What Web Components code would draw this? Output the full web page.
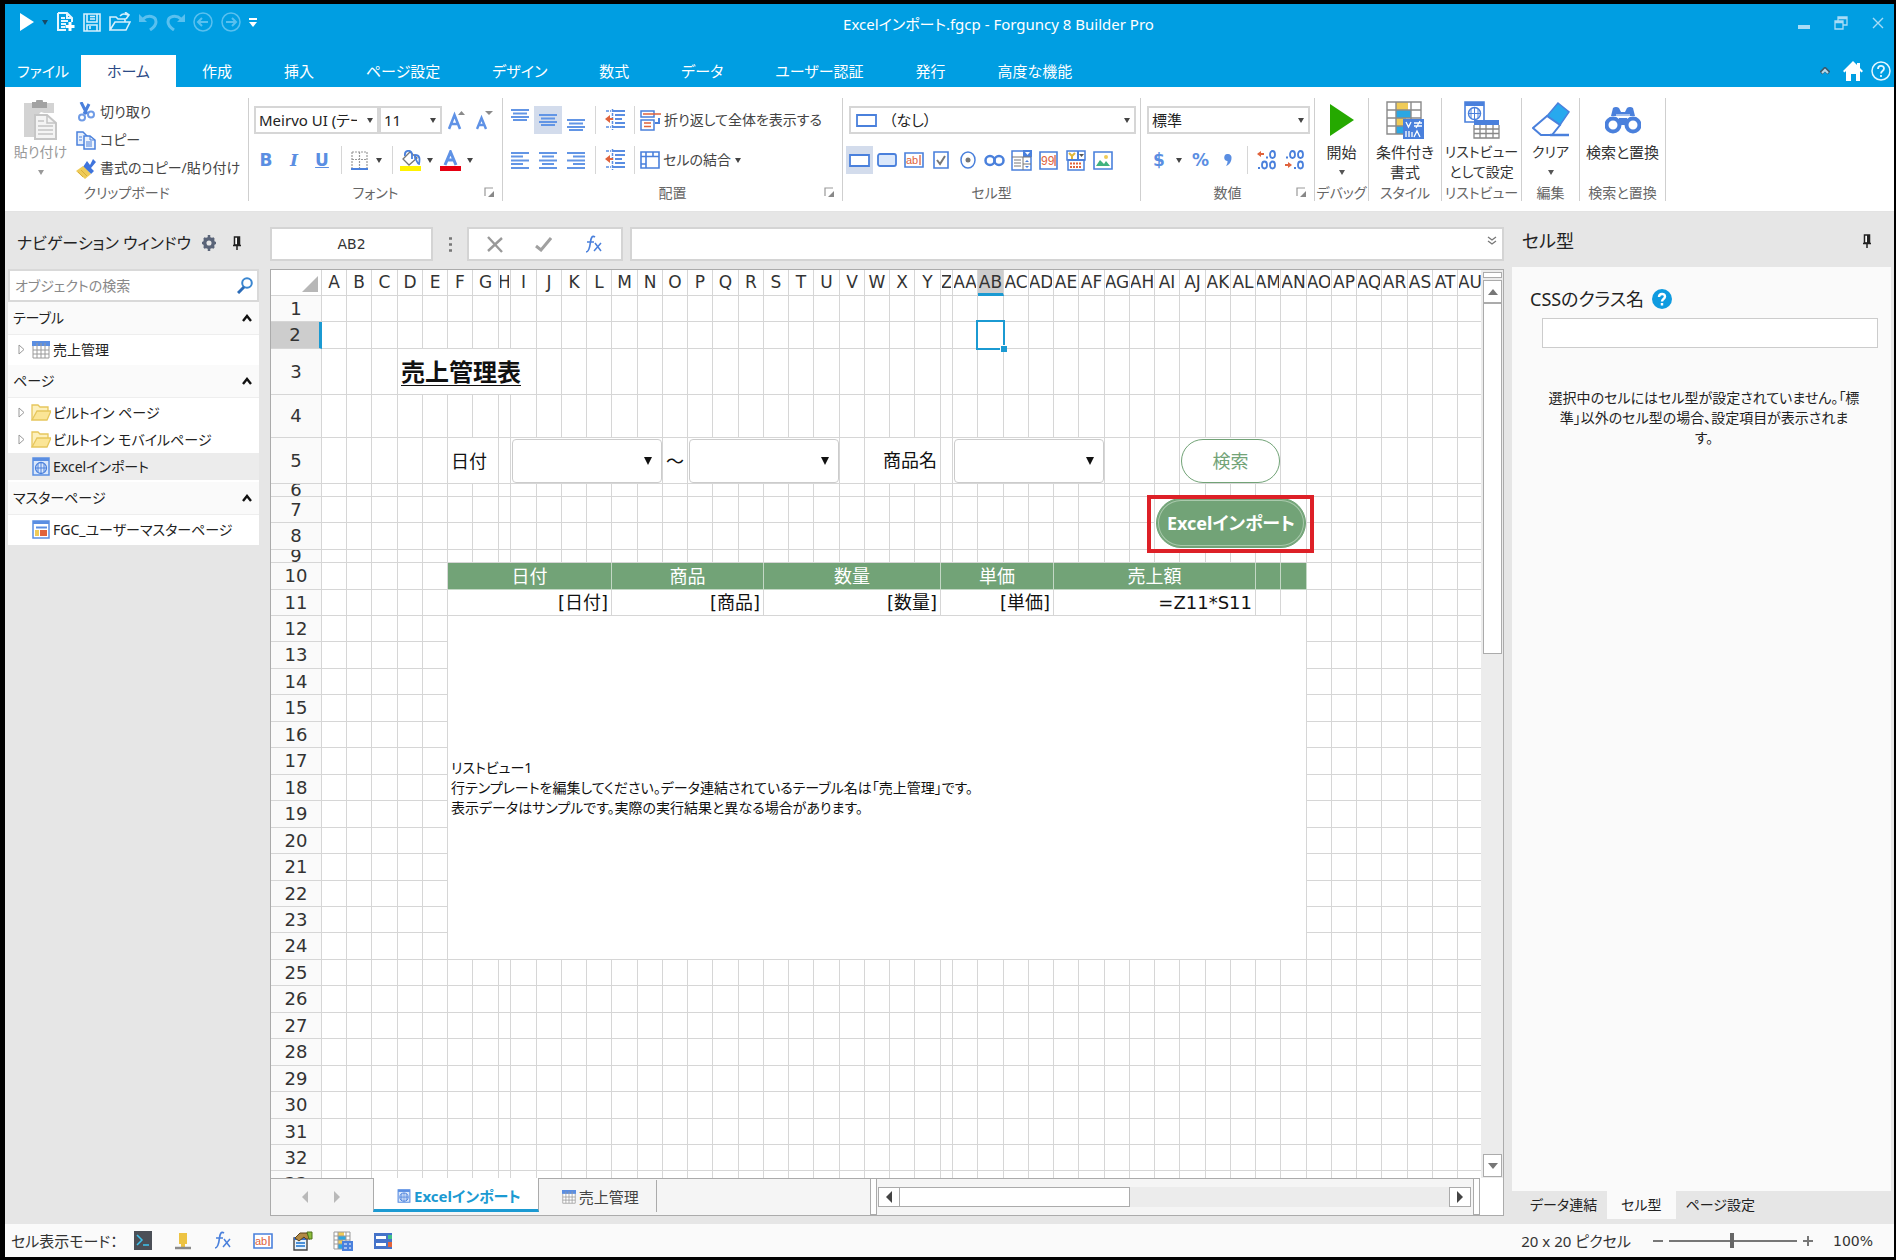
<!DOCTYPE html>
<html lang="ja">
<head>
<meta charset="utf-8">
<title>Excelインポート.fgcp - Forguncy 8 Builder Pro</title>
<style>
  html, body { height: 100%; margin: 0; }
  body {
    background: #000;
    font: 15px/20px "Noto Sans", "Noto Sans CJK JP", sans-serif;
    font-feature-settings: "palt";
    color: #333;
    overflow: hidden;
  }
</style>
</head>
<body>
<app-window></app-window>
<script>
const B = '#4a80dc', O = '#e0633c', G = '#8a8a8a', Y = '#efcb58', L = '#a9dcf6';

/* name: [width, height, markup] */
const ICONS = {
  down: [8, 5, `<path d="M1 0h6L4 5z" fill="currentColor"/>`],
  run: [14, 18, `<path d="M0 0l14 9-14 9z" fill="#fff"/>`],
  newdoc: [18, 20, `<path d="M1 1h9l5 5v4M1 1v17h8M10 1v5h5M4 6h4M4 9h7M4 12h5M4 15h4" fill="none" stroke="#e4f6ff" stroke-width="2"/><path d="M13 10v9M8.500 14.500h9" stroke="#fff" stroke-width="3"/>`],
  save: [18, 19, `<path d="M1 1h16v17H1zM4 1v8h10V1M7 3.500h5M7 6h5M4 18v-6h10v6M7 13v3" fill="none" stroke="#d5f0fd" stroke-width="1.600"/>`],
  open: [22, 20, `<path d="M1 18V5h6l2 2h7v3M1 18l5-8h15l-4 8zM11 4c3-3 5-2 8-1M16 0l4 3-3 4" fill="none" stroke="#d5f0fd" stroke-width="1.600"/>`],
  undo: [19, 18, `<path d="M4 6c5-4.500 13-3 13 3 0 4-3 6-6 8" fill="none" stroke="#59c0ef" stroke-width="3"/><path d="M0 1v8h8z" fill="#59c0ef"/>`],
  redo: [19, 18, `<path d="M15 6C10 1.500 2 3 2 9c0 4 3 6 6 8" fill="none" stroke="#59c0ef" stroke-width="3"/><path d="M19 1v8h-8z" fill="#59c0ef"/>`],
  back: [20, 20, `<circle cx="10" cy="10" r="9" fill="none" stroke="#59c0ef" stroke-width="1.500"/><path d="M15 10H6M9 6l-4 4 4 4" fill="none" stroke="#59c0ef" stroke-width="2"/>`],
  fwd: [20, 20, `<circle cx="10" cy="10" r="9" fill="none" stroke="#59c0ef" stroke-width="1.500"/><path d="M5 10h9M11 6l4 4-4 4" fill="none" stroke="#59c0ef" stroke-width="2"/>`],
  qmenu: [8, 9, `<path d="M0 1h8" stroke="#fff" stroke-width="2"/><path d="M0 4h8L4 9z" fill="#fff"/>`],
  min: [12, 14, `<path d="M0 11h12" stroke="${L}" stroke-width="4"/>`],
  restore: [14, 14, `<path d="M1 5h8v8H1zM1 6.500h8M4 5V1h9v8H9M4 2.500h9" fill="none" stroke="${L}" stroke-width="1.300"/>`],
  close: [12, 12, `<path d="M1 1l10 10M11 1L1 11" stroke="${L}" stroke-width="1.400"/>`],
  collapse: [10, 9, `<path d="M1 6l4-4 4 4" fill="none" stroke="#39586b" stroke-width="4"/><path d="M2 6l3-3 3 3" fill="none" stroke="#b8d8e8" stroke-width="2"/>`],
  home: [20, 20, `<path d="M10 0l4 4V2h3v5l3 3-1.500 1.500L17 10v10h-4v-7H8v7H3V10l-1.500 1.500L0 10z" fill="#fff"/>`],
  qhelp: [20, 20, `<circle cx="10" cy="10" r="9" fill="none" stroke="#e4f6ff" stroke-width="1.500"/><path d="M7 8c0-4 6-4 6-.5 0 2.500-3 2.500-3 5M10 14v2" fill="none" stroke="#e4f6ff" stroke-width="1.800"/>`],
  help: [20, 20, `<circle cx="10" cy="10" r="10" fill="#0f9be0"/><path d="M7 8c0-4 6-4 6-.5 0 2.500-3 2.500-3 5M10 14v2.500" fill="none" stroke="#fff" stroke-width="2.400"/>`],
  paste: [34, 40, `<path d="M0 3h30v10H20l-3-1-7 7v18H0z" fill="#d3d3d3"/><path d="M8 2h4a3 3 0 0 1 7 0h4v6H8z" fill="#a2a2a2"/><path d="M11 15h12l9 8v16H11z" fill="#f4f4f4" stroke="#c6c6c6" stroke-width="2"/><path d="M23 15v8h9M14 21h6M14 26h15M14 30h15M14 34h15" fill="none" stroke="#c3c3c3" stroke-width="1.500"/>`],
  cut: [17, 20, `<path d="M3 0l6 12M11 2L6 12" stroke="${B}" stroke-width="3"/><circle cx="4" cy="15.500" r="3" fill="none" stroke="#6f9be6" stroke-width="2"/><circle cx="13" cy="12.500" r="3" fill="none" stroke="#6f9be6" stroke-width="2"/>`],
  copy: [20, 19, `<path d="M1 1h6l4 4v9H1z" fill="#e8f0fc" stroke="${B}" stroke-width="1.500"/><path d="M8 5h6l5 4v9H8z" fill="#eef4fd" stroke="${B}" stroke-width="1.500"/><path d="M14 5v4h5M3 6h3M3 9h3M10 11h6M10 13h6M10 15h6" fill="none" stroke="${B}"/>`],
  painter: [20, 21, `<path d="M11 3l3 4 3-6 3 3-5 6 3 3-3 3-8-7z" fill="#3f74dc"/><path d="M7 8l8 8-6 5-9-8z" fill="${Y}"/><path d="M2 14l5 5M5 12l6 6" stroke="#d8ae3a" fill="none"/>`],
  fontup: [17, 19, `<path d="M1 18L6.500 4 12 18M3 13h7" fill="none" stroke="#5f92e6" stroke-width="2.600"/><path d="M10 4h7l-3.500-4z" fill="${G}"/>`],
  fontdown: [17, 19, `<path d="M1 18L5.500 7 10 18M3 14h5" fill="none" stroke="#5f92e6" stroke-width="2.400"/><path d="M9 0h8l-4 4z" fill="${G}"/>`],
  borders: [17, 19, `<path d="M1 1h15v16M1 1v16M8.500 1v16M1 8.500h15" fill="none" stroke="#999" stroke-width="1.200" stroke-dasharray="2 1"/><path d="M0 18h17" stroke="${B}" stroke-width="2"/>`],
  bucket: [21, 21, `<path d="M10 2l7 6-8 7-6-6z" fill="#fff" stroke="#777" stroke-width="1.300"/><path d="M5 6c-1-6 6-7 7-2v5M15 5c5 0 5 4 4 9-2 0-2-4-4-6z" fill="none" stroke="${B}" stroke-width="1.800"/><path d="M0 18.500h21" stroke="#fff200" stroke-width="5"/>`],
  fontcolor: [21, 21, `<path d="M5 15l5.500-13L16 15M7 10h7" fill="none" stroke="#5f92e6" stroke-width="3"/><path d="M0 18.500h21" stroke="#e60012" stroke-width="5"/>`],
  vtop: [18, 22, `<path d="M0 1h18M2 4.500h14M0 8h18M2 11h14" stroke="#6295e5" stroke-width="2"/>`],
  vmid: [18, 12, `<path d="M0 1h18M2 4.500h14M0 8h18M2 11h14" stroke="#6295e5" stroke-width="2"/>`],
  vbot: [18, 22, `<path d="M0 11h18M2 14.500h14M0 18h18M2 21h14" stroke="#6295e5" stroke-width="2"/>`],
  aleft: [18, 17, `<path d="M0 1h18M0 4.500h12M0 8.500h18M0 12h12M0 16h18" stroke="#6295e5" stroke-width="2"/>`],
  acenter: [18, 17, `<path d="M0 1h18M3 4.500h12M0 8.500h18M3 12h12M0 16h18" stroke="#6295e5" stroke-width="2"/>`],
  aright: [18, 17, `<path d="M0 1h18M6 4.500h12M0 8.500h18M6 12h12M0 16h18" stroke="#6295e5" stroke-width="2"/>`],
  indent: [20, 22, `<path d="M8 2h12M10 6h10M10 10h7M10 14h10M8 18h12" stroke="#5a8ee2" stroke-width="2"/><path d="M1 2h5M1 18h5M7.500 0v21" stroke="#5a8ee2" stroke-width="1.500" stroke-dasharray="3 1"/><path d="M0 10l5-4v8z" fill="${O}"/><path d="M3 10h5" stroke="${O}" stroke-width="2"/>`],
  wrap: [21, 21, `<path d="M1 1h13v6H1zM1 10h13v10H1z" fill="#fff" stroke="${B}" stroke-width="1.500"/><path d="M3 4h18M4 13h7M4 16.500h7" stroke="${O}" stroke-width="1.500"/><path d="M19 8v5h-4" fill="none" stroke="${B}" stroke-width="2"/>`],
  merge: [20, 18, `<path d="M1 1h18v16H1zM6 1v16M1 5.500h18M13 1v4.500M1 13h5" fill="none" stroke="${B}" stroke-width="1.600"/>`],
  ctNone: [21, 13, `<path d="M1 1h19v11H1z" fill="#fff" stroke="${B}" stroke-width="1.800"/>`],
  ctButton: [20, 14, `<rect x="1" y="1" width="18" height="12" rx="2" fill="#dbe8fb" stroke="${B}" stroke-width="1.800"/>`],
  ctText: [20, 16, `<path d="M1 1h18v14H1z" fill="#fff" stroke="${B}" stroke-width="1.600"/><text x="2" y="12" font-size="11" font-family="Liberation Sans" fill="${O}">ab</text><path d="M16 3v10" stroke="${O}" stroke-width="1.300"/>`],
  ctCheck: [16, 18, `<path d="M1 1h14v16H1z" fill="#fff" stroke="${B}" stroke-width="1.600"/><path d="M4 9l3 4 5-8" fill="none" stroke="#777" stroke-width="2"/>`],
  ctRadio: [16, 18, `<ellipse cx="8" cy="9" rx="7" ry="8" fill="#fff" stroke="${B}" stroke-width="1.500"/><circle cx="8" cy="9" r="2.500" fill="#777"/>`],
  ctLink: [21, 13, `<circle cx="6" cy="6.500" r="4.500" fill="none" stroke="${B}" stroke-width="2.500"/><circle cx="15" cy="6.500" r="4.500" fill="none" stroke="${B}" stroke-width="2.500"/>`],
  ctList: [21, 21, `<path d="M1 1h19v19H1z" fill="#fff" stroke="${B}" stroke-width="1.500"/><path d="M12 0h9v7h-9z" fill="${B}"/><path d="M14 2h5l-2.500 3z" fill="#fff"/><path d="M12 7v13M1 7h19M3 10h7M3 13h7M3 16h7M12 14h8" stroke="#777"/><path d="M14 12l2-2 2 2zM14 16l2 2 2-2z" fill="${B}"/>`],
  ctNum: [19, 19, `<path d="M1 1h17v17H1z" fill="#fff" stroke="${B}" stroke-width="1.600"/><text x="2" y="14" font-size="12" font-family="Liberation Sans" fill="${O}">99</text><path d="M16 4v11" stroke="${O}" stroke-width="1.300"/>`],
  ctDate: [20, 21, `<path d="M1 1h18v9H1zM2 10h16v10H2z" fill="#fff" stroke="${B}" stroke-width="1.500"/><path d="M3 3l3 3 3-3M6 6v3" stroke="#e0b73a" stroke-width="2" fill="none"/><path d="M12 1v9M2 10h17" stroke="${B}" stroke-width="2"/><path d="M13 4h5l-2.500 3z" fill="#555"/><path d="M4 13.500h12M4 17h12" stroke="${O}" stroke-width="2" stroke-dasharray="2 1"/>`],
  ctImage: [20, 19, `<path d="M1 1h18v17H1z" fill="#fff" stroke="${B}" stroke-width="1.600"/><path d="M3 15l4-6 4 4 2-3 4 5z" fill="#3fb27f"/><circle cx="13" cy="6" r="2" fill="${Y}"/>`],
  decinc: [20, 20, `<path d="M0 4l4-3v6z" fill="${O}"/><path d="M2 4h5" stroke="${O}" stroke-width="2"/><path d="M9 7.500h2M1 18h2" stroke="${B}" stroke-width="2"/><g fill="none" stroke="${B}" stroke-width="1.800"><ellipse cx="15.500" cy="4.500" rx="2.500" ry="3.500"/><ellipse cx="7.500" cy="15" rx="2.500" ry="3.500"/><ellipse cx="15.500" cy="15" rx="2.500" ry="3.500"/></g>`],
  decdec: [20, 20, `<path d="M7 15l-4-3v6z" fill="${O}"/><path d="M0 15h5" stroke="${O}" stroke-width="2"/><path d="M9 18h2M1 7.500h2" stroke="${B}" stroke-width="2"/><g fill="none" stroke="${B}" stroke-width="1.800"><ellipse cx="7.500" cy="4.500" rx="2.500" ry="3.500"/><ellipse cx="15.500" cy="4.500" rx="2.500" ry="3.500"/><ellipse cx="15.500" cy="15" rx="2.500" ry="3.500"/></g>`],
  comma: [8, 12, `<path d="M4 0a3.500 3.500 0 0 1 3.500 4C7.500 8 5 11 2 12c1-1.500 1.500-3 1.500-5A3.500 3.500 0 0 1 4 0z" fill="#5a8ee2"/>`],
  launcher: [11, 11, `<path d="M1 9V1h8" fill="none" stroke="#999" stroke-width="1.200"/><path d="M10 4v6H4z" fill="#888"/>`],
  play: [24, 32, `<path d="M0 0l24 16L0 32z" fill="#25a900"/>`],
  cond: [38, 38, `<path d="M1 1h34v32H1z" fill="#fff"/><path d="M10 1h12v8H10zM10 17h10v8H10z" fill="${Y}"/><path d="M10 9h15v8H10zM10 25h7v8h-7z" fill="#2aa7e4"/><path d="M1 1h34v32H1zM1 9h34M1 17h34M1 25h34M10 1v32M25 1v32" fill="none" stroke="#8a8a8a" stroke-width="1.400"/><path d="M17 18h21v20H17z" fill="${B}"/><path d="M28 22h8M28 25h8M34 20l-4 7M20 30v6M23 30v6M20 21l2.500 5 2.500-5M28 36l3-6 3 6M26 31v5" fill="none" stroke="#fff" stroke-width="1.300"/>`],
  listview: [36, 38, `<path d="M1 1h19v20H1z" fill="#fff" stroke="${B}" stroke-width="1.600"/><path d="M1 1h19v4H1z" fill="${B}"/><circle cx="10.500" cy="12.500" r="6" fill="none" stroke="${B}" stroke-width="1.500"/><path d="M10.500 6v13M4 12.500h13M7 8v9M14 8v9" stroke="${B}"/><path d="M10 19h25v18H10z" fill="#fff"/><path d="M10 19h25v5H10z" fill="${B}"/><path d="M10 24v13h25V24M10 28h25M10 32.500h25M16 24v13M22 24v13M29 24v13" fill="none" stroke="#888" stroke-width="1.300"/>`],
  eraser: [38, 36, `<path d="M26 1l11 9-9 13-13-9z" fill="#27a9ee" stroke="${B}" stroke-width="1.500"/><path d="M15 14l13 9-8 10H9L1 26z" fill="#fff" stroke="${B}" stroke-width="2"/><path d="M18 33h19" stroke="${B}" stroke-width="2.500"/>`],
  binoc: [36, 28, `<path d="M8 2a4 3 0 0 1 6 0l2 4h4l2-4a4 3 0 0 1 6 0l2 8H6z" fill="${B}"/><circle cx="8" cy="19" r="6.500" fill="#fff" stroke="${B}" stroke-width="4"/><circle cx="28" cy="19" r="6.500" fill="#fff" stroke="${B}" stroke-width="4"/><path d="M14 12h8v7h-8z" fill="${B}"/><path d="M11 9h14" stroke="#fff"/>`],
  gear: [14, 16, `<circle cx="7" cy="8" r="4.300" fill="none" stroke="#5a6478" stroke-width="3.500"/><path d="M7 0v3M7 13v3M0 8h2M12 8h2M2 3l2 2M12 3l-2 2M2 13l2-2M12 13l-2-2" stroke="#5a6478" stroke-width="2.500"/>`],
  pin: [8, 14, `<path d="M1.500 1h5v8h-5z" fill="#fff" stroke="#222" stroke-width="1.500"/><path d="M4 1h3v8H4z" fill="#222"/><path d="M0 9.500h8M4 10v4" stroke="#222" stroke-width="1.500"/>`],
  search: [16, 17, `<circle cx="10" cy="6" r="4.800" fill="none" stroke="#3a86d0" stroke-width="2"/><path d="M7 10l-6 6" stroke="#2c6cb8" stroke-width="3"/>`],
  caret: [10, 8, `<path d="M1 7l4-5 4 5" fill="none" stroke="#111" stroke-width="2.400"/>`],
  expand: [6, 11, `<path d="M1 1l5 4.500L1 10z" fill="#fff" stroke="#999"/>`],
  table: [18, 18, `<path d="M1 1h16v16H1z" fill="#fff"/><path d="M0 0h18v5H0z" fill="#5a8ee2"/><path d="M1 5v12h16V5M1 9h16M1 13h16M5 2v15M9 2v15M13 2v15" fill="none" stroke="#9a9a9a"/>`],
  folder: [20, 17, `<path d="M1 16V1h6l2 2h8v4" fill="#fdf0bd" stroke="#e6c65c" stroke-width="1.300"/><path d="M1 16l5-9h14l-4 9z" fill="#fbe596" stroke="#e6c65c" stroke-width="1.300"/>`],
  page: [18, 19, `<path d="M1 1h16v17H1z" fill="#dbe8fb" stroke="#5a8ee2" stroke-width="1.500"/><path d="M1 1h16v3H1z" fill="#5a8ee2"/><circle cx="9" cy="11" r="5.500" fill="none" stroke="${B}" stroke-width="1.300"/><path d="M9 5v12M3 11h12M6 7v8M12 7v8" stroke="${B}"/>`],
  master: [18, 19, `<path d="M1 1h16v17H1z" fill="#fff" stroke="#5a8ee2" stroke-width="1.500"/><path d="M1 1h16v3H1z" fill="#5a8ee2"/><path d="M4 7.500h11" stroke="#5a8ee2" stroke-width="2"/><path d="M3 10h4v6H3z" fill="${Y}"/><path d="M8 10h7v6H8z" fill="${O}"/>`],
  dots: [3, 15, `<path d="M0 1.500h3M0 7.500h3M0 13.500h3" stroke="#777" stroke-width="2.500"/>`],
  x: [16, 17, `<path d="M1 1l14 15M15 2L1 15" stroke="#999" stroke-width="2.400"/>`],
  check: [17, 15, `<path d="M1 9l5 4L16 1" fill="none" stroke="#a0a0a0" stroke-width="3"/>`],
  fx: [18, 19, `<path d="M10 2c-3-2-4 1-4.500 5S4 17 1 17M2 7h7" fill="none" stroke="${B}" stroke-width="1.700"/><path d="M10 8l6 8M16 8l-7 8" stroke="${B}" stroke-width="1.500"/>`],
  dblchev: [10, 10, `<path d="M1 1l4 3 4-3M1 5l4 3 4-3" fill="none" stroke="#777" stroke-width="1.300"/>`],
  corner: [16, 16, `<path d="M16 0v16H0z" fill="#b7b7b7"/>`],
  up: [10, 6, `<path d="M0 6h10L5 0z" fill="#777"/>`],
  dn: [10, 6, `<path d="M0 0h10L5 6z" fill="#777"/>`],
  lt: [6, 12, `<path d="M6 0v12L0 6z" fill="currentColor"/>`],
  rt: [6, 12, `<path d="M0 0v12l6-6z" fill="currentColor"/>`],
  combo: [8, 8, `<path d="M0 0h8L4 8z" fill="#111"/>`],
  term: [18, 19, `<path d="M0 0h18v19H0z" fill="#4b4f57"/><path d="M3 4l5 5-5 5M9 14h6" fill="none" stroke="#3fc3ee" stroke-width="1.500"/>`],
  marker: [16, 18, `<path d="M4 1h8v11H4zM6 12h4v4H6z" fill="#edc343"/><path d="M0 16h16" stroke="#8a8a8a" stroke-width="2.500"/>`],
  props: [20, 20, `<path d="M1 7h13v12H1z" fill="#e6f2fc" stroke="#444" stroke-width="1.400"/><path d="M1 6h13v3H1z" fill="#3a6cc4"/><path d="M3 12h9M3 15h9" stroke="#4a90d9" stroke-width="2"/><path d="M2 7l5-5h7l3 6h-4l-2-2-5 4z" fill="#b28a45" stroke="#5c431a"/><path d="M14 1h5v7h-3z" fill="#8dbd3c" stroke="#4c7018"/>`],
  cells: [20, 20, `<path d="M1 1h16v17H1z" fill="#fff"/><path d="M5 1h6v4H5zM5 9h5v4H5z" fill="${Y}"/><path d="M5 5h8v4H5zM5 13h4v5H5z" fill="#2aa7e4"/><path d="M1 1h16v17H1zM1 5h16M1 9h16M1 13h16M5 1v17M13 1v17" fill="none" stroke="#999"/><path d="M9 10h11v10H9z" fill="${B}"/><path d="M11 13h3M16 13h2M11 17h3M16 17h2" stroke="#fff"/>`],
  rows: [20, 18, `<path d="M1 1h18v16H1z" fill="#4573c9"/><path d="M3 4h10v3H3zM3 11h10v3H3z" fill="#fff"/><path d="M15 3h4v4h-4z" fill="#3fc08a"/><path d="M15 10h4v5h-4z" fill="${O}"/>`],
  minus: [10, 10, `<path d="M0 5h10" stroke="#777" stroke-width="2"/>`],
  plus: [10, 10, `<path d="M0 5h10M5 0v10" stroke="#777" stroke-width="2"/>`],
};

const BASE = `
  *, ::before, ::after { box-sizing: border-box; }
  :host { box-sizing: border-box; display: block; }
  :host([hidden]) { display: none; }
  button, input, select { font: inherit; font-feature-settings: inherit; color: inherit; margin: 0; padding: 0; border: 0; background: none; border-radius: 0; outline: 0; }
  button { display: flex; align-items: center; justify-content: center; white-space: nowrap; }
`;

function define(name, html, setup) {
  customElements.define(name, class extends HTMLElement {
    constructor() {
      super();
      this.attachShadow({ mode: 'open' });
    }
    connectedCallback() {
      if (this.shadowRoot.firstChild) return;
      const t = document.createElement('template');
      const body = typeof html === 'function' ? html(this) : html;
      t.innerHTML = `<style>${BASE}</style>${body}`;
      this.shadowRoot.append(t.content.cloneNode(true));
      if (setup) setup(this);
    }
  });
}
const ic = n => `<fg-icon name="${n}"></fg-icon>`;
const small = n => `<fg-icon name="${n}" size="14"></fg-icon>`;

define('fg-icon', el => {
  const [w, h, m] = ICONS[el.getAttribute('name')];
  const s = el.getAttribute('size');
  return `<style>:host{display:inline-flex;flex:none}svg{display:block}</style>
  <svg width="${s || w}" height="${s || h}" viewBox="0 0 ${w} ${h}" aria-hidden="true">${m}</svg>`;
});

define('title-bar', `
<style>
  :host { display: grid; grid-template-columns: 823fr auto 730fr; height: 51px; padding: 0 10px 15px 15px; background: #009ee2; color: #fff; align-items: center; }
  nav, .win { display: flex; align-items: center; }
  nav { gap: 8px; }
  .run { gap: 7px; color: #174a66; }
  h1 { margin: 0; font-size: 15px; font-weight: 400; padding-top: 3px; white-space: nowrap; }
  .win { justify-content: flex-end; gap: 24px; padding-top: 2px; }
</style>
<nav aria-label="クイックアクセス">
  <button class="run">${ic('run')}${ic('down')}</button>
  <button>${ic('newdoc')}</button><button>${ic('save')}</button><button>${ic('open')}</button>
  <button>${ic('undo')}</button><button>${ic('redo')}</button><button>${ic('back')}</button>
  <button>${ic('fwd')}</button><button>${ic('qmenu')}</button>
</nav>
<h1>Excelインポート.fgcp - Forguncy 8 Builder Pro</h1>
<div class="win"><button>${ic('min')}</button><button>${ic('restore')}</button><button>${ic('close')}</button></div>`);

define('menu-tabs', `
<style>
  :host { display: flex; height: 32px; background: #009ee2; color: #fff; padding-right: 3px; }
  a { color: inherit; text-decoration: none; padding: 0 26px; display: flex; align-items: center; white-space: nowrap; }
  a.file { padding: 0 12px; }
  a[aria-current] { background: #fff; color: #2b4a86; }
  .right { margin-left: auto; display: flex; align-items: center; gap: 8px; }
  .right button:first-child { margin-right: 5px; }
</style>
<a class="file" href="#">ファイル</a>
${['ホーム', '作成', '挿入', 'ページ設定', 'デザイン', '数式', 'データ', 'ユーザー認証', '発行', '高度な機能']
  .map(t => `<a href="#"${t === 'ホーム' ? ' aria-current="page"' : ''}>${t}</a>`).join('')}
<div class="right"><button>${ic('collapse')}</button><button>${ic('home')}</button><button>${ic('qhelp')}</button></div>`);

define('ribbon-group', el => `
<style>
  :host { display: flex; flex-direction: column; flex: none; border-right: 1px solid #cfcfcf; height: 103px; }
  .body { flex: 1; min-height: 0; padding-top: 2px; }
  footer { display: flex; height: 17px; align-items: center; justify-content: center; color: #666; white-space: nowrap; position: relative; }
  footer fg-icon { position: absolute; right: 7px; top: 3px; }
</style>
<div class="body"><slot></slot></div>
<footer>${el.getAttribute('label')}${el.hasAttribute('launcher') ? ic('launcher') : ''}</footer>`);

define('big-tool', el => `
<style>
  button { flex-direction: column; justify-content: flex-start; width: 100%; height: 84px; }
  .i { height: 40px; display: flex; align-items: center; margin-bottom: 2px; }
  .m { height: 20px; display: flex; align-items: center; color: var(--arrow, #555); }
</style>
<button><span class="i">${ic(el.getAttribute('icon'))}</span><span><slot></slot></span>${el.hasAttribute('menu') ? `<span class="m">${ic('down')}</span>` : ''}</button>`);

define('tool-button', el => `
<style>
  :host { flex: none; }
  .b { height: 28px; min-width: ${el.hasAttribute('menu') ? 24 : el.hasAttribute('tight') ? 27 : 28}px; }
  :host([pressed]) .b { background: #d3dcec; }
  .w { display: flex; align-items: center; color: #444; }
  .m { width: 16px; height: 28px; }
</style>
<div class="w"><button class="b">${el.hasAttribute('icon') ? ic(el.getAttribute('icon')) : ''}<slot></slot></button>${el.hasAttribute('menu') ? `<button class="m">${ic('down')}</button>` : ''}</div>`);

define('drop-down', el => `
<style>
  :host { position: relative; display: block; }
  select { appearance: none; width: 100%; height: 28px; border: 2px solid #d6d6d6; background: #fff; color: #222; font-size: 15px; padding: 0 20px 0 ${el.hasAttribute('icon') ? 38 : 3}px; }
  :host([form]) select { height: 44px; border: 1px solid #ccc; border-radius: 4px; }
  .a, .i { position: absolute; top: 0; bottom: 0; display: flex; align-items: center; pointer-events: none; color: #444; }
  .a { right: 5px; }
  :host([form]) .a { right: 10px; }
  .i { left: 7px; }
</style>
<select aria-label="${el.getAttribute('label') || ''}"><option>${el.getAttribute('value') || ''}</option></select>
${el.hasAttribute('icon') ? `<span class="i">${ic(el.getAttribute('icon'))}</span>` : ''}
<span class="a">${ic(el.hasAttribute('form') ? 'combo' : 'down')}</span>`);

define('ribbon-bar', `
<style>
  :host { display: flex; height: 125px; padding-top: 11px; background: #fff; border-bottom: 1px solid #e3e3e3; overflow: hidden; font-size: 14px; }
  .row { display: flex; align-items: center; height: 40px; padding-left: 3px; }
  hr { width: 1px; height: 28px; border: 0; background: #d6d6d6; margin: 0 5px; }
  .clip { display: flex; margin-top: -2px; }
  .clip big-tool { flex: none; width: 71px; color: #999; --arrow: #999; padding-top: 2px; }
  .clip button { height: 28px; gap: 4px; color: #444; justify-content: flex-start; }
  .clip span { width: 20px; display: flex; justify-content: center; }
  b, i, u { font: bold 17px "DejaVu Sans"; color: #5a8ee2; }
  i { font-family: "DejaVu Serif"; font-style: italic; }
  .lab { display: flex; gap: 3px; align-items: center; color: #444; white-space: nowrap; }
  .wide { font-size: 15px; }
  .g1 { width: 244px; } .g2 { width: 254px; } .g3 { width: 340px; } .g4 { width: 298px; } .g5 { width: 174px; }
  .g6 { width: 54px; } .g7 { width: 73px; } .g8 { width: 80px; } .g9 { width: 58px; } .g10 { width: 86px; }
</style>
<ribbon-group class="g1" label="クリップボード"><div class="clip">
  <big-tool icon="paste" menu>貼り付け</big-tool>
  <div><button><span>${ic('cut')}</span>切り取り</button><button><span>${ic('copy')}</span>コピー</button><button><span>${ic('painter')}</span>書式のコピー/貼り付け</button></div>
</div></ribbon-group>
<ribbon-group class="g2" label="フォント" launcher>
  <div class="row" style="padding-left:5px"><drop-down style="width:125px" label="フォント名" value="Meirvo UI (テー"></drop-down><drop-down style="width:63px" label="フォントサイズ" value="11"></drop-down>
    <tool-button icon="fontup"></tool-button><tool-button icon="fontdown"></tool-button></div>
  <div class="row"><tool-button><b>B</b></tool-button><tool-button><i>I</i></tool-button><tool-button><u>U</u></tool-button><hr>
    <tool-button icon="borders" menu></tool-button><hr><tool-button icon="bucket" menu></tool-button><tool-button icon="fontcolor" menu></tool-button></div>
</ribbon-group>
<ribbon-group class="g3" label="配置" launcher>
  <div class="row"><tool-button icon="vtop"></tool-button><tool-button icon="vmid" pressed></tool-button><tool-button icon="vbot"></tool-button><hr><tool-button icon="indent"></tool-button><hr>
    <button class="lab">${ic('wrap')}折り返して全体を表示する</button></div>
  <div class="row"><tool-button icon="aleft"></tool-button><tool-button icon="acenter"></tool-button><tool-button icon="aright"></tool-button><hr><tool-button icon="indent"></tool-button><hr>
    <button class="lab">${ic('merge')}セルの結合 ${ic('down')}</button></div>
</ribbon-group>
<ribbon-group class="g4" label="セル型">
  <div class="row" style="padding:0 4px 0 6px"><drop-down style="flex:1" icon="ctNone" label="セル型" value="（なし）"></drop-down></div>
  <div class="row"><tool-button tight icon="ctNone" pressed></tool-button>${['Button', 'Text', 'Check', 'Radio', 'Link', 'List', 'Num', 'Date', 'Image'].map(n => `<tool-button tight icon="ct${n}"></tool-button>`).join('')}</div>
</ribbon-group>
<ribbon-group class="g5" label="数値" launcher>
  <div class="row" style="padding:0 4px 0 6px"><drop-down style="flex:1" label="表示形式" value="標準"></drop-down></div>
  <div class="row" style="padding-left:6px"><tool-button menu><b>$</b></tool-button><tool-button tight><b>%</b></tool-button><tool-button icon="comma"></tool-button><hr><tool-button icon="decinc"></tool-button><tool-button icon="decdec"></tool-button></div>
</ribbon-group>
<ribbon-group class="g6" label="デバッグ"><big-tool class="wide" icon="play" menu>開始</big-tool></ribbon-group>
<ribbon-group class="g7" label="スタイル"><big-tool class="wide" icon="cond">条件付き<br>書式</big-tool></ribbon-group>
<ribbon-group class="g8" label="リストビュー"><big-tool icon="listview">リストビュー<br>として設定</big-tool></ribbon-group>
<ribbon-group class="g9" label="編集"><big-tool icon="eraser" menu>クリア</big-tool></ribbon-group>
<ribbon-group class="g10" label="検索と置換"><big-tool class="wide" icon="binoc">検索と置換</big-tool></ribbon-group>`);

define('nav-section', el => `
<style>
  header { display: flex; align-items: center; justify-content: space-between; height: 33px; padding: 0 7px 0 5px; background: #fafafa; border-bottom: 1px solid #eee; color: #222; }
  ul { margin: 0; padding: 1px 0 2px; list-style: none; }
  h3 { margin: 0; font: inherit; }
</style>
<header><h3>${el.getAttribute('label')}</h3>${ic('caret')}</header><ul role="list"><slot></slot></ul>`);

define('nav-item', el => `
<style>
  :host { display: flex; align-items: center; height: 27px; padding-left: 10px; color: #222; white-space: nowrap; }
  :host([selected]) { background: #ececec; }
  .e { width: 13px; display: flex; } .i { width: 20px; display: flex; justify-content: center; margin-right: 2px; }
</style>
<span class="e">${el.hasAttribute('branch') ? ic('expand') : ''}</span><span class="i">${ic(el.getAttribute('icon'))}</span><slot></slot>`);

define('nav-pane', `
<style>
  :host { display: flex; flex-direction: column; padding: 5px 11px 0 3px; font-size: 14px; }
  header { display: flex; align-items: center; height: 52px; padding-left: 9px; gap: 17px; color: #222; }
  h2 { margin: 0 -6px 0 0; font-size: 16px; font-weight: 400; white-space: nowrap; }
  .list { background: #fff; }
  .search { display: flex; align-items: center; height: 33px; border: 2px solid #d9d9d9; background: #fff; padding: 0 4px 0 5px; }
  input { flex: 1; min-width: 0; }
  input::placeholder { color: #888; opacity: 1; }
</style>
<header><h2>ナビゲーション ウィンドウ</h2>${ic('gear')}${ic('pin')}</header>
<div class="list">
  <div class="search"><input type="search" aria-label="オブジェクトの検索" placeholder="オブジェクトの検索">${ic('search')}</div>
  <nav-section label="テーブル"><nav-item icon="table" branch>売上管理</nav-item></nav-section>
  <nav-section label="ページ"><nav-item icon="folder" branch>ビルトイン ページ</nav-item><nav-item icon="folder" branch>ビルトイン モバイルページ</nav-item><nav-item icon="page" selected>Excelインポート</nav-item></nav-section>
  <nav-section label="マスターページ"><nav-item icon="master">FGC_ユーザーマスターページ</nav-item></nav-section>
</div>`);

define('formula-bar', `
<style>
  :host { display: flex; height: 34px; margin: 15px 0 8px; }
  input, .ops, .f { border: 2px solid #d4d4d4; background: #fff; }
  .name { width: 163px; text-align: center; color: #333; font-family: "DejaVu Sans"; font-size: 14px; }
  .d { width: 34px; display: flex; align-items: center; justify-content: center; }
  .ops { display: flex; width: 156px; align-items: center; justify-content: space-around; padding: 0 2px; margin-right: 7px; }
  .f { flex: 1; display: flex; padding: 6px 5px; }
  .f input { flex: 1; border: 0; }
  .f button { height: 12px; }
</style>
<input class="name" aria-label="名前ボックス" value="AB2"><span class="d">${ic('dots')}</span>
<div class="ops"><button>${ic('x')}</button><button>${ic('check')}</button><button>${ic('fx')}</button></div>
<div class="f"><input aria-label="数式"><button>${ic('dblchev')}</button></div>`);

/* Column and row sizes are in page pixels; the view draws them enlarged. */
const ZX = 1.2624, ZY = 1.3225;
const colName = i => (i < 26 ? '' : 'A') + String.fromCharCode(65 + i % 26);
const colNo = s => s.length === 1 ? s.charCodeAt(0) - 65 : 26 + s.charCodeAt(1) - 65;
const colSize = i => i === 7 || i === 25 ? 10 : 20;
const rowSize = r => ({ 3: 35, 4: 32, 5: 35, 6: 10, 9: 10 })[r] || 20;
const steps = (n, size, z, from) => {
  let acc = 0, out = [];
  for (let i = 0; i < n; i++) {
    const a = Math.round(acc * z);
    acc += size(i + from);
    out.push(Math.round(acc * z) - a);
  }
  return out;
};
const MERGES = [
  ['D', 3, 'I', 3, 'title', '売上管理表'],
  ['F', 5, 'G', 5, 'label', '日付'],
  ['I', 5, 'N', 5, 'ctl', '<drop-down form label="開始日"></drop-down>'],
  ['O', 5, 'O', 5, 'tilde', '～'],
  ['P', 5, 'U', 5, 'ctl', '<drop-down form label="終了日"></drop-down>'],
  ['W', 5, 'Y', 5, 'right', '商品名'],
  ['AA', 5, 'AF', 5, 'ctl', '<drop-down form label="商品名"></drop-down>'],
  ['AJ', 5, 'AM', 5, 'ctl', '<button class="find">検索</button>'],
  ['AI', 7, 'AN', 8, 'ctl imp', '<button class="import">Excelインポート</button><span class="mark"></span>'],
  ['F', 12, 'AN', 24, 'list', 'リストビュー1<br>行テンプレートを編集してください。データ連結されているテーブル名は「売上管理」です。<br>表示データはサンプルです。実際の実行結果と異なる場合があります。'],
];
[['F', 'L', '日付'], ['M', 'R', '商品'], ['S', 'Y', '数量'], ['Z', 'AD', '単価'], ['AE', 'AL', '売上額'], ['AM', 'AM', ''], ['AN', 'AN', '']].forEach(([a, b, t]) => {
  MERGES.push([a, 10, b, 10, 'head', t]);
  MERGES.push([a, 11, b, 11, 'right', t === '売上額' ? '=Z11*S11' : t && `[${t}]`]);
});

function buildSheet() {
  const COLS = 47, ROWS = 33;
  const cw = steps(COLS, colSize, ZX, 0), rh = steps(ROWS, rowSize, ZY, 1);
  const start = new Map(), covered = new Set();
  MERGES.forEach(m => {
    const c1 = colNo(m[0]), c2 = colNo(m[2]);
    start.set(c1 + ':' + m[1], m);
    for (let r = m[1]; r <= m[3]; r++) for (let c = c1; c <= c2; c++) if (r !== m[1] || c !== c1) covered.add(c + ':' + r);
  });
  let h = `<table><colgroup><col style="width:51px">${cw.map(w => `<col style="width:${w}px">`).join('')}</colgroup><thead><tr><th class="corner">${ic('corner')}</th>`;
  for (let c = 0; c < COLS; c++) h += `<th${c === 27 ? ' class="cur"' : ''}><span>${colName(c)}</span></th>`;
  h += '</tr></thead><tbody>';
  for (let r = 1; r <= ROWS; r++) {
    const hgt = rh[r - 1];
    h += `<tr style="height:${hgt}px"><th${r === 2 ? ' class="cur"' : ''}><span style="height:${hgt - 1}px">${r}</span></th>`;
    for (let c = 0; c < COLS; c++) {
      const k = c + ':' + r;
      if (covered.has(k)) continue;
      const m = start.get(k);
      if (m) h += `<td class="${m[4]}" colspan="${colNo(m[2]) - c + 1}" rowspan="${m[3] - r + 1}">${m[5]}</td>`;
      else if (c === 27 && r === 2) h += '<td class="sel"><i></i></td>';
      else h += '<td></td>';
    }
    h += '</tr>';
  }
  return h + '</tbody></table>';
}

define('sheet-grid', () => `
<style>
  :host { overflow: hidden; background: #fff; min-width: 0; min-height: 0; }
  table { border-collapse: separate; border-spacing: 0; table-layout: fixed; width: 0; color: #111; font-size: 18px; line-height: 24px; }
  th, td { padding: 0; border: solid #d6d6d6; border-width: 0 1px 1px 0; white-space: nowrap; overflow: hidden; }
  th { font: 18px/24px "DejaVu Sans"; color: #333; background: #fafafa; }
  thead th { height: 26px; background: #fff; font-size: 17px; vertical-align: top; }
  thead th span { display: flex; height: 23px; margin: 0 1px; justify-content: center; overflow: hidden; line-height: 24px; }
  tbody th span { display: flex; align-items: center; justify-content: center; overflow: hidden; }
  .corner { text-align: right; padding: 6px 3px 0 0; line-height: 0; }
  .cur { background: #cdcdcd; }
  thead .cur { background: #cdcdcd; border-bottom: 3px solid #1b9ad2; }
  tbody .cur { border-right: 3px solid #1b9ad2; }
  .title { font-weight: 700; font-size: 24px; line-height: 30px; padding-left: 3px; text-decoration: underline; text-underline-offset: 4px; text-decoration-thickness: 1px; }
  .label { padding-left: 3px; }
  .right { text-align: right; padding-right: 3px; font-family: "DejaVu Sans", "Noto Sans CJK JP"; }
  .tilde { text-align: center; }
  .head { background: #72a377; color: #fff; text-align: center; border-color: #c3d8c5; }
  .list { padding-left: 3px; font-size: 14px; line-height: 20px; }
  .ctl { padding-left: 1px; }
  .ctl button { width: 100%; }
  .find { height: 44px; border: 1px solid #72a377; border-radius: 22px; color: #72a377; }
  .import { height: 50px; border: 1px solid #72a377; border-radius: 25px; background: #72a377; box-shadow: inset 0 0 0 1px #72a377, inset 0 0 0 2px #a9c9ac; color: #fff; font-weight: 700; }
  .imp, .sel { position: relative; overflow: visible; }
  .mark { position: absolute; inset: -2px -8px -4px -8px; border: 4px solid #dd2027; pointer-events: none; }
  .sel i { position: absolute; inset: -2px; border: 2px solid #1b9ad2; }
  .sel i::after { content: ""; position: absolute; right: -4px; bottom: -4px; width: 7px; height: 7px; background: #1b9ad2; border: solid #fff; border-width: 1px 0 0 1px; }
</style>${buildSheet()}`);

define('scroll-v', `
<style>
  :host { display: flex; flex-direction: column; width: 23px; padding: 2px 1px 1px 2px; background: #ececec; border-right: 1px solid #ababab; }
  button, .t, .s { border: 1px solid #ababab; background: #fff; }
  .s { height: 6px; margin-bottom: 2px; } button { height: 23px; flex: none; }
  .t { flex: 350; } .r { flex: 502; }
</style><div class="s"></div><button>${ic('up')}</button><div class="t"></div><div class="r"></div><button>${ic('dn')}</button>`);

define('sheet-tabs', `
<style>
  :host { display: flex; height: 38px; background: #f5f5f5; border: solid #ababab; border-width: 1px; color: #444; }
  .nav { width: 102px; display: flex; align-items: center; justify-content: center; gap: 26px; color: #b9b9b9; padding-right: 3px; }
  a { display: flex; align-items: center; justify-content: center; gap: 3px; color: inherit; text-decoration: none; height: 32px; white-space: nowrap; padding: 2px 17px 0 23px; border-right: 1px solid #ababab; margin-top: 1px; }
  a.on { background: #fff; color: #1b9ad2; font-weight: 700; border: solid #ababab; border-width: 0 1px; border-bottom: 3px solid #1b9ad2; margin-top: -1px; height: 34px; padding-top: 5px; }
  .split { width: 7px; border: 1px solid #ababab; background: #fff; margin-top: -1px; }
  .h { flex: 602; display: flex; align-items: center; margin-left: 1px; }
  .gap { flex: 215; }
  .bar { display: flex; flex: 1; height: 20px; background: #ececec; margin-right: 2px; color: #444; }
  .bar button { width: 22px; border: 1px solid #ababab; background: #fff; }
  .t { flex: 231; border: solid #ababab; border-width: 1px 1px 1px 0; background: #fff; } .r { flex: 320; }
  .c { width: 23px; background: #fff; margin-top: -1px; }
</style>
<div class="nav">${ic('lt')}${ic('rt')}</div>
<a class="on" href="#">${small('page')}Excelインポート</a><a href="#">${small('table')}売上管理</a>
<div class="gap"></div><div class="split"></div>
<div class="h"><div class="bar"><button>${ic('lt')}</button><div class="t"></div><div class="r"></div><button>${ic('rt')}</button></div></div>
<div class="split"></div><div class="c"></div>`);

define('work-area', `
<style>
  :host { display: flex; flex-direction: column; min-width: 0; min-height: 0; padding-bottom: 8px; }
  .v { flex: 1; display: flex; min-height: 0; border: solid #ababab; border-width: 1px 0 0 1px; }
  sheet-grid { flex: 1; }
</style><formula-bar></formula-bar><div class="v"><sheet-grid></sheet-grid><scroll-v></scroll-v></div><sheet-tabs></sheet-tabs>`);

define('property-pane', `
<style>
  :host { display: flex; flex-direction: column; color: #222; }
  header { display: flex; align-items: center; justify-content: space-between; height: 55px; padding: 2px 20px 0 10px; }
  h2 { margin: 0; font-size: 18px; font-weight: 400; }
  .body { flex: 1; background: #fafafa; padding: 20px 13px 0 18px; }
  .l { display: flex; align-items: center; gap: 8px; height: 24px; font-size: 18px; }
  .body input { display: block; width: calc(100% - 12px); height: 30px; margin: 7px 0 40px 12px; border: 1px solid #ccc; background: #fff; }
  p { margin: 0; text-align: center; font-size: 14px; }
  footer { display: flex; height: 33px; padding-bottom: 5px; font-size: 14px; }
  a { display: flex; align-items: center; color: inherit; text-decoration: none; padding: 0 10px 0 18px; white-space: nowrap; }
  a.on { background: #fafafa; padding: 0 14px; }
  a.on + a { padding: 0 10px; }
</style>
<header><h2>セル型</h2>${ic('pin')}</header>
<div class="body"><div class="l"><label for="css">CSSのクラス名</label>${ic('help')}</div><input id="css">
<p>選択中のセルにはセル型が設定されていません。「標<br>準」以外のセル型の場合、設定項目が表示されま<br>す。</p></div>
<footer><a href="#">データ連結</a><a class="on" href="#">セル型</a><a href="#">ページ設定</a></footer>`);

define('status-bar', `
<style>
  :host { display: flex; align-items: center; height: 33px; background: #fafafa; padding: 0 21px 0 6px; color: #333; }
  .m { display: flex; gap: 12px; margin-left: 11px; }
  .m button { width: 28px; }
  .z { margin-left: auto; display: flex; align-items: center; gap: 6px; white-space: nowrap; }
  .z > span:first-child { margin-right: 16px; } .z > span:last-child { margin-left: 14px; font-family: "DejaVu Sans"; font-size: 14px; }
  input { appearance: none; width: 128px; height: 15px; background: linear-gradient(#777, #777) center / 100% 2px no-repeat; }
  input::-webkit-slider-thumb { appearance: none; width: 4px; height: 15px; background: #666; }
  button { height: 20px; }
</style>
<span>セル表示モード：</span>
<div class="m">${['term', 'marker', 'fx', 'ctText', 'props', 'cells', 'rows'].map(n => `<button>${ic(n)}</button>`).join('')}</div>
<div class="z"><span>20 x 20 ピクセル</span><button>${ic('minus')}</button><input type="range" aria-label="ズーム" min="0" max="100" value="49"><button>${ic('plus')}</button><span>100%</span></div>`);

define('app-window', `
<style>
  :host { display: flex; flex-direction: column; height: 100vh; padding: 4px 2px 3px 5px; background: #000; }
  main { flex: 1; min-height: 0; display: grid; grid-template-columns: 265px minmax(0, 1fr) 379px; grid-template-rows: minmax(0, 1fr); background: #e6e6e6; padding-right: 3px; }
  work-area { margin-right: 8px; }
  title-bar, menu-tabs, ribbon-bar, status-bar { flex: none; }
</style>
<title-bar></title-bar><menu-tabs></menu-tabs><ribbon-bar></ribbon-bar>
<main><nav-pane></nav-pane><work-area></work-area><property-pane></property-pane></main>
<status-bar></status-bar>`);
</script>
</body>
</html>
